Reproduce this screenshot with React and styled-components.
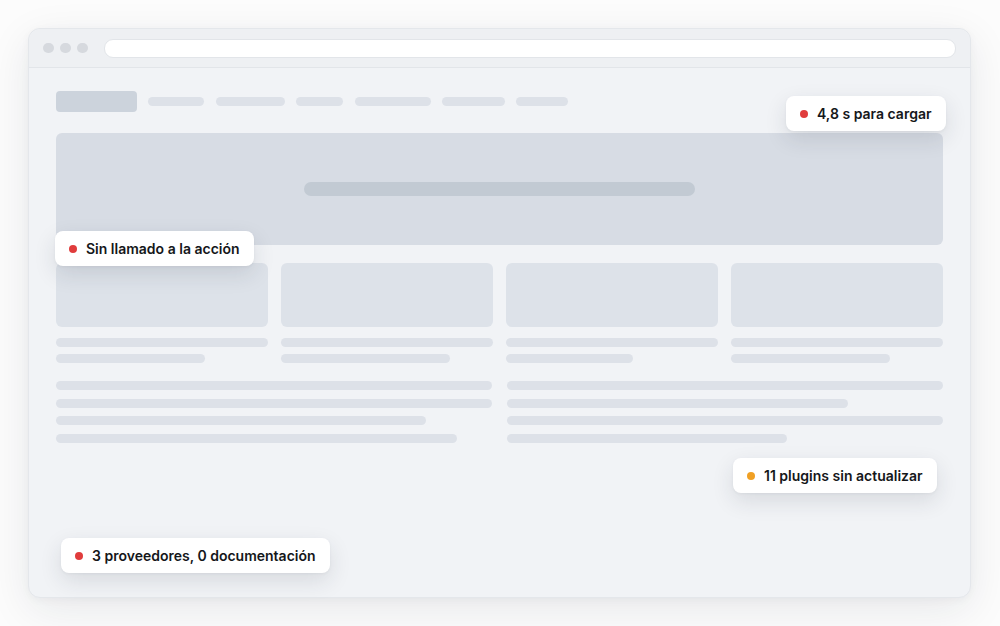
import React from 'react';
import styled, { createGlobalStyle } from 'styled-components';

const GlobalStyle = createGlobalStyle`
  html, body {
    margin: 0;
    padding: 0;
    background: #ffffff;
    font-family: Inter, "Noto Sans", sans-serif;
  }
`;

const Page = styled.div`
  width: 1000px;
  height: 626px;
  padding: 28px 29px 28px 28px;
  box-sizing: border-box;
  background: #fcfcfc;
`;

const Window = styled.div`
  position: relative;
  height: 570px;
  border-radius: 12px;
  background: #f1f3f6;
  border: 1px solid #e4e7eb;
  box-sizing: border-box;
  box-shadow: 0 12px 44px rgba(20, 30, 50, 0.09), 0 2px 8px rgba(20, 30, 50, 0.04);
  display: flex;
  flex-direction: column;
`;

const TopBar = styled.div`
  height: 38px;
  flex-shrink: 0;
  display: flex;
  align-items: center;
  padding: 0 14px 0 14px;
  background: #eef0f3;
  border-bottom: 1px solid #e2e5e9;
  border-radius: 12px 12px 0 0;
  gap: 6.5px;
`;

const Dot = styled.span`
  width: 10.5px;
  height: 10.5px;
  border-radius: 50%;
  background: #d6d9de;
`;

const UrlBar = styled.div`
  flex: 1;
  height: 17px;
  margin-left: 10px;
  border-radius: 9px;
  background: #ffffff;
  border: 1px solid #e2e5e9;
`;

const Content = styled.div`
  padding: 23px 27px 0 27px;
  display: flex;
  flex-direction: column;
`;

const Nav = styled.div`
  display: flex;
  align-items: center;
  gap: 11.4px;
  height: 21px;
`;

const Logo = styled.div`
  width: 81px;
  height: 21px;
  border-radius: 4px;
  background: #ccd3dc;
`;

const NavItem = styled.div`
  width: ${p => p.w}px;
  height: 9px;
  border-radius: 5px;
  background: #dde1e8;
`;

const Hero = styled.div`
  margin-top: 21px;
  height: 112px;
  border-radius: 6px;
  background: #d7dce4;
  display: flex;
  align-items: center;
  justify-content: center;
`;

const HeroBar = styled.div`
  width: 391px;
  height: 14px;
  border-radius: 7px;
  background: #c2cad3;
`;

const Cards = styled.div`
  margin-top: 18px;
  display: grid;
  grid-template-columns: repeat(4, 1fr);
  gap: 13px;
`;

const Card = styled.div`
  display: flex;
  flex-direction: column;
`;

const CardImage = styled.div`
  height: 64px;
  border-radius: 6px;
  background: #dde2e9;
`;

const Line = styled.div`
  width: ${p => p.w};
  height: 9px;
  border-radius: 5px;
  background: #dde1e8;
  margin-top: ${p => p.mt || 0}px;
`;

const TextCols = styled.div`
  margin-top: 18px;
  display: grid;
  grid-template-columns: 1fr 1fr;
  gap: 15px;
`;

const TextCol = styled.div`
  display: flex;
  flex-direction: column;
  gap: 8.5px;
`;

const Badge = styled.div`
  position: absolute;
  left: ${p => p.x}px;
  top: ${p => p.y}px;
  height: 35px;
  display: flex;
  align-items: center;
  gap: 9px;
  padding: 0 14px;
  background: #ffffff;
  border-radius: 8px;
  box-shadow: 0 8px 22px rgba(30, 40, 60, 0.12), 0 1px 3px rgba(30, 40, 60, 0.05);
  font-size: 14px;
  font-weight: 600;
  color: #15171a;
  white-space: nowrap;
`;

const BadgeDot = styled.span`
  width: 8px;
  height: 8px;
  border-radius: 50%;
  background: ${p => (p.warn ? '#f0a024' : '#e03c3c')};
`;

const navWidths = [56, 69, 47, 76, 63, 52];
const cardWidths = ['149px', '169px', '127px', '159px'];

const badges = [
  { x: 757, y: 67, text: '4,8 s para cargar' },
  { x: 26, y: 202, text: 'Sin llamado a la acción' },
  { x: 704, y: 429, text: '11 plugins sin actualizar', warn: true },
  { x: 32, y: 509, text: '3 proveedores, 0 documentación' },
];

const App = () => {
  return (
    <>
      <GlobalStyle />
      <Page>
        <Window>
          <TopBar>
            <Dot />
            <Dot />
            <Dot />
            <UrlBar />
          </TopBar>
          <Content>
            <Nav>
              <Logo />
              {navWidths.map((w, i) => (
                <NavItem key={i} w={w} />
              ))}
            </Nav>
            <Hero>
              <HeroBar />
            </Hero>
            <Cards>
              {cardWidths.map((w, i) => (
                <Card key={i}>
                  <CardImage />
                  <Line w="100%" mt={11} />
                  <Line w={w} mt={7} />
                </Card>
              ))}
            </Cards>
            <TextCols>
              <TextCol>
                <Line w="100%" />
                <Line w="100%" />
                <Line w="370px" />
                <Line w="401px" />
              </TextCol>
              <TextCol>
                <Line w="100%" />
                <Line w="341px" />
                <Line w="100%" />
                <Line w="280px" />
              </TextCol>
            </TextCols>
          </Content>
          {badges.map((b, i) => (
            <Badge key={i} x={b.x} y={b.y}>
              <BadgeDot warn={b.warn} />
              {b.text}
            </Badge>
          ))}
        </Window>
      </Page>
    </>
  );
};

export default App;
